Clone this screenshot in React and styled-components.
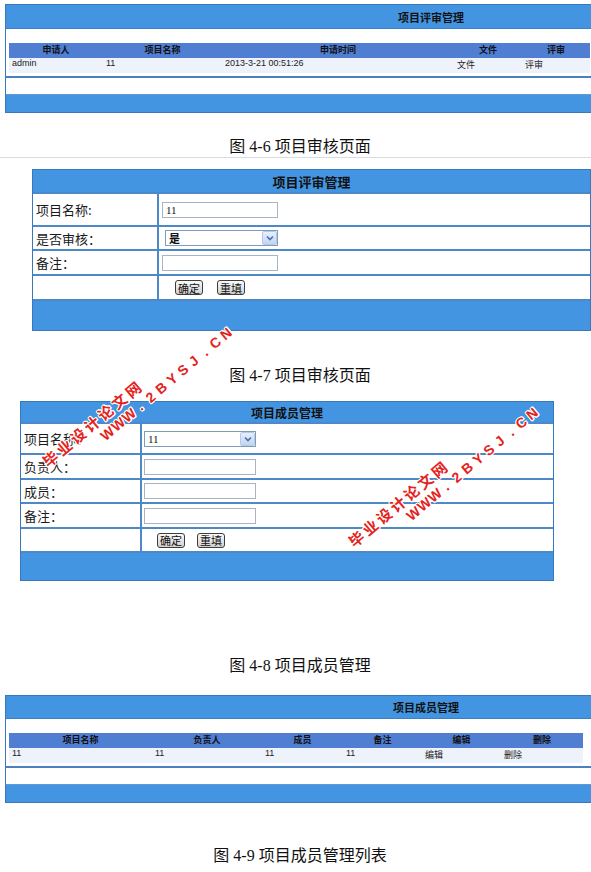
import React from 'react'
import styled, { createGlobalStyle } from 'styled-components'

const GlobalStyle = createGlobalStyle`
body {
  margin: 0;
  background: #fff;
  font-family: "Noto Sans CJK SC", sans-serif;
}
`

const Page = styled.div`
position: relative;
width: 591px;
height: 872px;
overflow: hidden;
display: flex;
flex-direction: column;
background: #fff;
`

// list style panel (fig 4-6 / 4-9)
const ListPanel = styled.section`
margin: ${p => p.$top}px 0 0 5px;
border: 1px solid #3a78bd;
border-right: none;
background: #fff;
`
const ListHeader = styled.div`
height: ${p => p.$h}px;
box-sizing: border-box;
background: #4395e1;
border-bottom: 1px solid #3b7fc6;
display: flex;
align-items: center;
padding-left: ${p => p.$indent}px;
font: bold 11px "Noto Sans CJK SC", sans-serif;
color: #111;
`
const Gap = styled.div`
height: ${p => p.$h}px;
`
const Grid = styled.div`
display: grid;
grid-template-columns: ${p => p.$cols};
margin: 0 ${p => p.$right}px 0 3px;
`
const HeadCell = styled.div`
height: 15px;
line-height: 15px;
background: #4f7ed3;
text-align: center;
font: bold 9px "Noto Sans CJK SC", sans-serif;
color: #111;
`
const BodyCell = styled.div`
height: 15px;
line-height: 15px;
background: #eef2fb;
padding-left: 3px;
font: 9px "Liberation Sans", "Noto Sans CJK SC", sans-serif;
color: #222;
white-space: nowrap;
`
const Divider = styled.div`
height: 2px;
margin-top: 3px;
background: #4a80bf;
`
const ListFooter = styled.div`
height: ${p => p.$h}px;
box-sizing: border-box;
background: #4395e1;
border-top: 1px solid #5e9ad6;
`

const Caption = styled.div`
margin-top: ${p => p.$top}px;
height: 20px;
line-height: 20px;
padding-left: 9px;
text-align: center;
font-size: 16px;
font-family: "Liberation Serif", "Noto Sans CJK SC", serif;
color: #111;
white-space: pre;
`
const Rule = styled.div`
height: 1px;
background: #d6dce3;
`

// form style panel (fig 4-7 / 4-8)
const FormPanel = styled.section`
margin: ${p => p.$top}px 0 0 ${p => p.$left}px;
width: ${p => p.$width}px;
box-sizing: border-box;
border: 1px solid #3a78bd;
background: #fff;
`
const FormTitle = styled.div`
height: ${p => p.$h}px;
background: #4395e1;
display: flex;
align-items: center;
justify-content: center;
font: bold ${p => p.$size}px "Noto Sans CJK SC", sans-serif;
color: #111;
`
const FormRow = styled.div`
display: grid;
grid-template-columns: ${p => p.$label}px 1fr;
height: ${p => p.$h}px;
box-sizing: border-box;
border-top: 2px solid #4d89c9;
`
const Label = styled.div`
box-sizing: border-box;
border-right: 2px solid #4d89c9;
display: flex;
align-items: center;
padding-left: 3px;
font-size: 13px;
color: #1a1a1a;
`
const Field = styled.div`
display: flex;
align-items: center;
gap: ${p => p.$gap || 14}px;
padding-left: ${p => p.$pad}px;
`
const TextInput = styled.input`
width: ${p => p.$w}px;
height: 16px;
box-sizing: border-box;
margin: 0;
padding: 0 3px;
border: 1px solid #a9b4c2;
font: 11px "Liberation Serif", serif;
color: #111;
outline: none;
`
const FakeSelect = styled.div`
width: ${p => p.$w}px;
height: 16px;
margin-left: ${p => p.$shift || 0}px;
box-sizing: border-box;
border: 1px solid #7f9db9;
display: flex;
align-items: center;
justify-content: space-between;
padding-left: 3px;
font: ${p => (p.$bold ? 'bold' : 'normal')} 11px "Liberation Serif", "Noto Sans CJK SC", serif;
color: #111;
`
const SelectArrow = styled.span`
width: 15px;
height: 14px;
box-sizing: border-box;
border: 1px solid #b5c9e8;
border-radius: 2px;
background: linear-gradient(#e6effc, #c2d5f4);
display: flex;
align-items: center;
justify-content: center;
`
const Button = styled.button`
width: 28px;
height: 15px;
margin: 0;
padding: 0;
box-sizing: border-box;
border: 1px solid #3d3d3d;
border-radius: 3px;
background: linear-gradient(#fafafa, #d0d0d0);
font: 11px "Noto Sans CJK SC", sans-serif;
line-height: 12px;
color: #111;
`
const FormFooter = styled.div`
height: ${p => p.$h}px;
box-sizing: border-box;
background: #4395e1;
border-top: 2px solid #4d89c9;
`

// watermark stamped over the figures
const Watermark = styled.div`
position: absolute;
left: ${p => p.$x}px;
top: ${p => p.$y}px;
transform: rotate(-40deg);
transform-origin: 0 0;
pointer-events: none;
`
const MarkRow = styled.div`
display: flex;
height: 18px;
align-items: center;
margin-left: ${p => p.$indent}px;
`
const MarkChar = styled.span`
display: inline-block;
width: ${p => p.$w}px;
text-align: center;
font: bold ${p => p.$size}px ${p => p.$font};
color: #e3231c;
text-shadow: 1px 0 0 #fff, -1px 0 0 #fff, 0 1px 0 #fff, 0 -1px 0 #fff,
  1px 1px 0 #fff, -1px -1px 0 #fff, 1px -1px 0 #fff, -1px 1px 0 #fff;
`

function Mark({ x, y }) {
  return (
    <Watermark $x={x} $y={y}>
      <MarkRow $indent={0}>
        {'毕业设计论文网'.split('').map((c, i) => (
          <MarkChar key={i} $w={18} $size={15} $font='"Noto Sans CJK SC", sans-serif'>{c}</MarkChar>
        ))}
      </MarkRow>
      <MarkRow $indent={62}>
        {'WWW.2BYSJ.CN'.split('').map((c, i) => (
          <MarkChar key={i} $w={14.1} $size={14} $font='"Liberation Sans", sans-serif'>{c}</MarkChar>
        ))}
      </MarkRow>
    </Watermark>
  )
}

function Chevron() {
  return (
    <svg width="8" height="6" viewBox="0 0 8 6">
      <path d="M1 1.5 L4 4.5 L7 1.5" fill="none" stroke="#4d6fa8" strokeWidth="1.6" />
    </svg>
  )
}

function ListFigure({ top, headerH, indent, cols, right, heads, rows }) {
  return (
    <ListPanel $top={top}>
      <ListHeader $h={headerH} $indent={indent}>{heads.title}</ListHeader>
      <Gap $h={14} />
      <Grid $cols={cols} $right={right}>
        {heads.cols.map(h => <HeadCell key={h}>{h}</HeadCell>)}
        {rows.map((v, i) => <BodyCell key={i}>{v}</BodyCell>)}
      </Grid>
      <Divider />
      <Gap $h={16} />
      <ListFooter $h={18} />
    </ListPanel>
  )
}

export default function App() {
  return (
    <Page>
      <GlobalStyle />

      <ListFigure
        top={4}
        headerH={24}
        indent={392}
        cols="94px 119px 232px 68px 1fr"
        right={1}
        heads={{ title: '项目评审管理', cols: ['申请人', '项目名称', '申请时间', '文件', '评审'] }}
        rows={['admin', '11', '2013-3-21 00:51:26', '文件', '评审']}
      />
      <Caption $top={24}>{'图 4-6 项目审核页面'}</Caption>
      <Rule />

      <FormPanel $top={11} $left={32} $width={559}>
        <FormTitle $h={22} $size={13}>项目评审管理</FormTitle>
        <FormRow $label={126} $h={33}>
          <Label>项目名称:</Label>
          <Field $pad={3}><TextInput $w={116} defaultValue="11" readOnly /></Field>
        </FormRow>
        <FormRow $label={126} $h={24}>
          <Label>是否审核：</Label>
          <Field $pad={3}>
            <FakeSelect $w={113} $shift={3} $bold>是<SelectArrow><Chevron /></SelectArrow></FakeSelect>
          </Field>
        </FormRow>
        <FormRow $label={126} $h={25}>
          <Label>备注：</Label>
          <Field $pad={3}><TextInput $w={116} readOnly /></Field>
        </FormRow>
        <FormRow $label={126} $h={25}>
          <Label />
          <Field $pad={16}>
            <Button>确定</Button>
            <Button>重填</Button>
          </Field>
        </FormRow>
        <FormFooter $h={31} />
      </FormPanel>
      <Caption $top={35}>{'图 4-7 项目审核页面'}</Caption>

      <FormPanel $top={15} $left={20} $width={534}>
        <FormTitle $h={20} $size={12}>项目成员管理</FormTitle>
        <FormRow $label={121} $h={31}>
          <Label>项目名称：</Label>
          <Field $pad={2}>
            <FakeSelect $w={112}>11<SelectArrow><Chevron /></SelectArrow></FakeSelect>
          </Field>
        </FormRow>
        <FormRow $label={121} $h={25}>
          <Label>负责人：</Label>
          <Field $pad={2}><TextInput $w={112} readOnly /></Field>
        </FormRow>
        <FormRow $label={121} $h={24}>
          <Label>成员：</Label>
          <Field $pad={2}><TextInput $w={112} readOnly /></Field>
        </FormRow>
        <FormRow $label={121} $h={25}>
          <Label>备注：</Label>
          <Field $pad={2}><TextInput $w={112} readOnly /></Field>
        </FormRow>
        <FormRow $label={121} $h={24}>
          <Label />
          <Field $pad={15} $gap={12}>
            <Button>确定</Button>
            <Button>重填</Button>
          </Field>
        </FormRow>
        <FormFooter $h={29} />
      </FormPanel>
      <Caption $top={75}>{'图 4-8 项目成员管理'}</Caption>

      <ListFigure
        top={19}
        headerH={23}
        indent={387}
        cols="143px 110px 81px 79px 79px 82px"
        right={7}
        heads={{ title: '项目成员管理', cols: ['项目名称', '负责人', '成员', '备注', '编辑', '删除'] }}
        rows={['11', '11', '11', '11', '编辑', '删除']}
      />
      <Caption $top={43}>{'图 4-9 项目成员管理列表'}</Caption>

      <Mark x={37} y={457} />
      <Mark x={343} y={537} />
    </Page>
  )
}
